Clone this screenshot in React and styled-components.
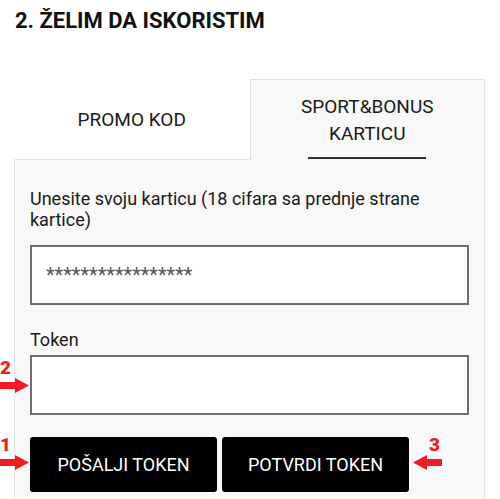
import React, { useState } from "react";
import styled, { createGlobalStyle } from "styled-components";

const GlobalStyle = createGlobalStyle`
  body {
    margin: 0;
    background: #fff;
    font-family: Roboto, "Noto Sans", Arial, sans-serif;
    color: #1a1a1a;
  }
`;

export default function App() {
  const [tab, setTab] = useState("kartica");
  const [card, setCard] = useState("*****************");
  const [token, setToken] = useState("");

  return (
    <Page>
      <GlobalStyle />
      <Heading>2. ŽELIM DA ISKORISTIM</Heading>
      <Tabs>
        <Tab active={tab === "promo"} onClick={() => setTab("promo")}>
          <TabLabel active={tab === "promo"}>PROMO KOD</TabLabel>
        </Tab>
        <Tab active={tab === "kartica"} onClick={() => setTab("kartica")}>
          <TabLabel active={tab === "kartica"}>
            SPORT&amp;BONUS
            <br />
            KARTICU
          </TabLabel>
        </Tab>
      </Tabs>
      <Panel>
        <Label>Unesite svoju karticu (18 cifara sa prednje strane kartice)</Label>
        <Input
          className="card"
          autoFocus
          value={card}
          onFocus={(e) => {
            const n = e.target.value.length;
            e.target.setSelectionRange(n, n);
          }}
          onChange={(e) => setCard(e.target.value)}
        />
        <Label className="token">Token</Label>
        <Input value={token} onChange={(e) => setToken(e.target.value)} />
        <Buttons>
          <Button>POŠALJI TOKEN</Button>
          <Button>POTVRDI TOKEN</Button>
        </Buttons>
      </Panel>

      <Marker style={{ left: 0, top: 360 }}>
        <Num>2</Num>
        <Arrow />
      </Marker>
      <Marker style={{ left: 0, top: 437 }}>
        <Num>1</Num>
        <Arrow />
      </Marker>
      <Marker style={{ left: 412, top: 437 }} right>
        <Num right>3</Num>
        <Arrow left />
      </Marker>
    </Page>
  );
}

function Arrow({ left }) {
  return (
    <svg width="29" height="15" viewBox="0 0 29 15">
      <path
        d={
          left
            ? "M0 7.5 L14 0 L14 4 L29 4 L29 11 L14 11 L14 15 Z"
            : "M29 7.5 L15 0 L15 4 L0 4 L0 11 L15 11 L15 15 Z"
        }
        fill="#ee1c25"
      />
    </svg>
  );
}

const Page = styled.div`
  position: relative;
  width: 500px;
  min-height: 499px;
  overflow: hidden;
`;

const Heading = styled.h2`
  margin: 0;
  padding: 8px 15px 0;
  font-size: 22px;
  line-height: 26px;
  font-weight: 700;
  color: #111;
`;

const Tabs = styled.div`
  display: flex;
  margin: 45px 15px 0 14px;
`;

const Tab = styled.div`
  flex: 1;
  height: 81px;
  box-sizing: border-box;
  display: flex;
  align-items: center;
  justify-content: center;
  cursor: pointer;
  background: ${({ active }) => (active ? "#f8f8f8" : "#fff")};
  border: 1px solid ${({ active }) => (active ? "#e2e2e2" : "transparent")};
  border-bottom: ${({ active }) => (active ? "none" : "1px solid #e2e2e2")};
`;

const TabLabel = styled.span`
  position: relative;
  font-size: 19px;
  line-height: 27px;
  text-align: center;
  color: #1a1a1a;

  &::after {
    content: "";
    display: ${({ active }) => (active ? "block" : "none")};
    position: absolute;
    left: 50%;
    bottom: -12px;
    width: 118px;
    height: 2px;
    margin-left: -59px;
    background: #333;
  }
`;

const Panel = styled.div`
  margin: 0 15px 0 14px;
  padding: 28px 15px 20px;
  background: #f8f8f8;
  border: 1px solid #e2e2e2;
  border-top: none;
  display: flex;
  flex-direction: column;

  .token {
    margin-top: 24px;
  }
  .card {
    margin-top: 15px;
  }
`;

const Label = styled.label`
  font-size: 18px;
  line-height: 21px;
  color: #1a1a1a;
  padding-right: 20px;
`;

const Input = styled.input`
  margin-top: 5px;
  height: 60px;
  box-sizing: border-box;
  border: 2px solid #6e6e6e;
  background: #fff;
  padding: 0 14px;
  font-family: Roboto, Arial, sans-serif;
  font-size: 20px;
  color: #555;
  caret-color: #222;
  outline: none;
`;

const Buttons = styled.div`
  display: flex;
  gap: 5px;
  margin-top: 22px;
`;

const Button = styled.button`
  width: 187px;
  height: 55px;
  border: none;
  border-radius: 3px;
  background: #000;
  color: #fff;
  font-family: Roboto, Arial, sans-serif;
  font-size: 18px;
  cursor: pointer;
`;

const Marker = styled.div`
  position: absolute;
  display: flex;
  flex-direction: column;
  align-items: ${({ right }) => (right ? "flex-end" : "flex-start")};
  width: 30px;
  gap: 3px;
`;

const Num = styled.span`
  font-size: 19px;
  line-height: 15px;
  font-weight: 900;
  color: #ee1c25;
  margin-right: ${({ right }) => (right ? "2px" : "0")};
`;
